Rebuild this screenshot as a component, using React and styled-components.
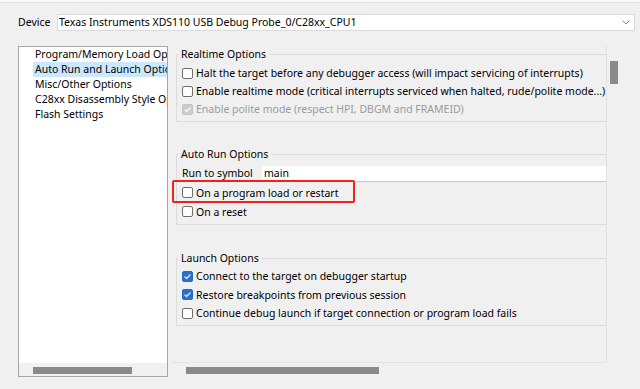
import React from "react";
import styled, { createGlobalStyle } from "styled-components";

const GlobalStyle = createGlobalStyle`
  html, body { margin: 0; padding: 0; background: #f0f0f0; }
  body {
    font-family: "Noto Sans", "Segoe UI", sans-serif;
    font-size: 10.5px;
    color: #000;
  }
  * { box-sizing: border-box; }
`;

const Root = styled.div`
  width: 640px;
  height: 389px;
  overflow: hidden;
  display: flex;
  flex-direction: column;
`;

const TopEdge = styled.div`
  height: 3px;
  background: #f8f8f8;
  border-bottom: 1px solid #e4e4e4;
`;

const DeviceRow = styled.div`
  margin-top: 11px;
  height: 17px;
  display: flex;
  align-items: center;
  padding: 0 5px 0 18px;
`;

const DeviceLabel = styled.span`
  width: 39px;
  flex: none;
  line-height: 17px;
`;

const Combo = styled.div`
  flex: 1;
  height: 17px;
  background: #fff;
  border: 1px solid #dadada;
  display: flex;
  align-items: center;
  justify-content: space-between;
  padding: 0 4px 0 1px;
  line-height: 15px;
  white-space: nowrap;
`;

const Main = styled.div`
  margin-top: 15px;
  height: 331px;
  display: flex;
  padding-left: 18px;
`;

const Tree = styled.div`
  width: 150px;
  height: 331px;
  border: 1px solid #a6a6a6;
  background: #fff;
  display: flex;
  flex-direction: column;
`;

const TreeList = styled.div`
  flex: 1;
  overflow: hidden;
`;

const TreeItem = styled.div`
  height: 15px;
  line-height: 15px;
  margin-left: 14px;
  padding-left: 2px;
  white-space: nowrap;
  overflow: hidden;
  background: ${(p) => (p.$selected ? "#cce8ff" : "transparent")};
`;

const HTrack = styled.div`
  height: ${(p) => p.$h}px;
  background: #f0f0f0;
  padding: 4px 0 0 ${(p) => p.$offset}px;
`;

const Thumb = styled.div`
  width: ${(p) => p.$w}px;
  height: ${(p) => p.$h}px;
  background: #8a8a8a;
`;

const RightPane = styled.div`
  margin-left: 3px;
  display: grid;
  grid-template-columns: 436px 14px;
  grid-template-rows: 317px 14px;
`;

const Viewport = styled.div`
  overflow: hidden;
  border-right: 1px solid #e2e2e2;
  border-bottom: 1px solid #e2e2e2;
`;

const Content = styled.div`
  width: 560px;
  padding-left: 5px;
`;

const Group = styled.fieldset`
  margin: ${(p) => p.$top}px 0 0 0;
  padding: 0 0 ${(p) => p.$bottom}px 1px;
  border: 1px solid #dcdcdc;
  min-width: 0;
`;

const Legend = styled.legend`
  padding: 0 3px;
  margin: 0;
  line-height: 16px;
  height: 16px;
  color: #000;
`;

const GroupBody = styled.div`
  padding: ${(p) => p.$top}px 0 0 4px;
`;

const CheckRow = styled.div`
  position: relative;
  height: ${(p) => p.$h}px;
  display: flex;
  align-items: center;
  white-space: nowrap;
  color: ${(p) => (p.$disabled ? "#9b9b9b" : "#000")};
`;

const Box = styled.span`
  width: 11px;
  height: 11px;
  flex: none;
  margin-right: 3px;
  border-radius: 2px;
  border: 1px solid
    ${(p) => (p.$disabled ? "#c4c4c4" : p.$checked ? "#1f6dc8" : "#6e6e6e")};
  background: ${(p) =>
    p.$disabled ? "#cdcdcd" : p.$checked ? "#2a72c8" : "#fdfdfd"};
  display: flex;
  align-items: center;
  justify-content: center;
`;

const Highlight = styled.div`
  position: absolute;
  left: -10px;
  top: -3px;
  width: 183px;
  height: 23px;
  border: 2px solid #f2201f;
  border-radius: 2px;
  pointer-events: none;
`;

const SymbolRow = styled.div`
  margin-top: 4px;
  height: 16px;
  display: flex;
  margin-bottom: 1px;
`;

const SymbolLabel = styled.span`
  width: 80px;
  flex: none;
  line-height: 15px;
  white-space: nowrap;
`;

const SymbolField = styled.div`
  flex: 1;
  background: #fff;
  border-bottom: 1px solid #c6c6c6;
  padding-left: 2px;
  line-height: 15px;
`;

const VTrack = styled.div`
  background: #f0f0f0;
  padding: 15px 0 0 3px;
`;

const Corner = styled.div`
  background: #f0f0f0;
`;

const Check = ({ checked, disabled, children, highlight, h = 18 }) => (
  <CheckRow $disabled={disabled} $h={h}>
    <Box $checked={checked} $disabled={disabled}>
      {checked && (
        <svg width="9" height="9" viewBox="0 0 9 9">
          <path
            d="M1.6 4.6 L3.6 6.5 L7.4 2.6"
            fill="none"
            stroke="#fff"
            strokeWidth="1.2"
          />
        </svg>
      )}
    </Box>
    {children}
    {highlight && <Highlight />}
  </CheckRow>
);

const treeItems = [
  "Program/Memory Load Options",
  "Auto Run and Launch Options",
  "Misc/Other Options",
  "C28xx Disassembly Style Options",
  "Flash Settings",
];

export default function App() {
  return (
    <Root>
      <GlobalStyle />
      <TopEdge />
      <DeviceRow>
        <DeviceLabel>Device</DeviceLabel>
        <Combo>
          <span>Texas Instruments XDS110 USB Debug Probe_0/C28xx_CPU1</span>
          <svg width="8" height="5" viewBox="0 0 8 5">
            <path d="M0.5 0.5 L4 4 L7.5 0.5" fill="none" stroke="#8a8a8a" strokeWidth="1" />
          </svg>
        </Combo>
      </DeviceRow>
      <Main>
        <Tree>
          <TreeList>
            {treeItems.map((t, i) => (
              <TreeItem key={t} $selected={i === 1}>
                {t}
              </TreeItem>
            ))}
          </TreeList>
          <HTrack $h={13} $offset={14}>
            <Thumb $w={99} $h={7} />
          </HTrack>
        </Tree>
        <RightPane>
          <Viewport>
            <Content>
              <Group $top={0} $bottom={3}>
                <Legend>Realtime Options</Legend>
                <GroupBody $top={2}>
                  <Check>
                    Halt the target before any debugger access (will impact servicing of interrupts)
                  </Check>
                  <Check>
                    Enable realtime mode (critical interrupts serviced when halted, rude/polite mode...)
                  </Check>
                  <Check checked disabled>
                    Enable polite mode (respect HPI, DBGM and FRAMEID)
                  </Check>
                </GroupBody>
              </Group>
              <Group $top={24} $bottom={3}>
                <Legend>Auto Run Options</Legend>
                <GroupBody $top={0}>
                  <SymbolRow>
                    <SymbolLabel>Run to symbol</SymbolLabel>
                    <SymbolField>main</SymbolField>
                  </SymbolRow>
                  <Check highlight h={19}>On a program load or restart</Check>
                  <Check h={19}>On a reset</Check>
                </GroupBody>
              </Group>
              <Group $top={25} $bottom={3}>
                <Legend>Launch Options</Legend>
                <GroupBody $top={1}>
                  <Check checked>Connect to the target on debugger startup</Check>
                  <Check checked h={19}>Restore breakpoints from previous session</Check>
                  <Check>Continue debug launch if target connection or program load fails</Check>
                </GroupBody>
              </Group>
            </Content>
          </Viewport>
          <VTrack>
            <Thumb $w={8} $h={23} />
          </VTrack>
          <HTrack $h={14} $offset={15}>
            <Thumb $w={193} $h={7} />
          </HTrack>
          <Corner />
        </RightPane>
      </Main>
    </Root>
  );
}
